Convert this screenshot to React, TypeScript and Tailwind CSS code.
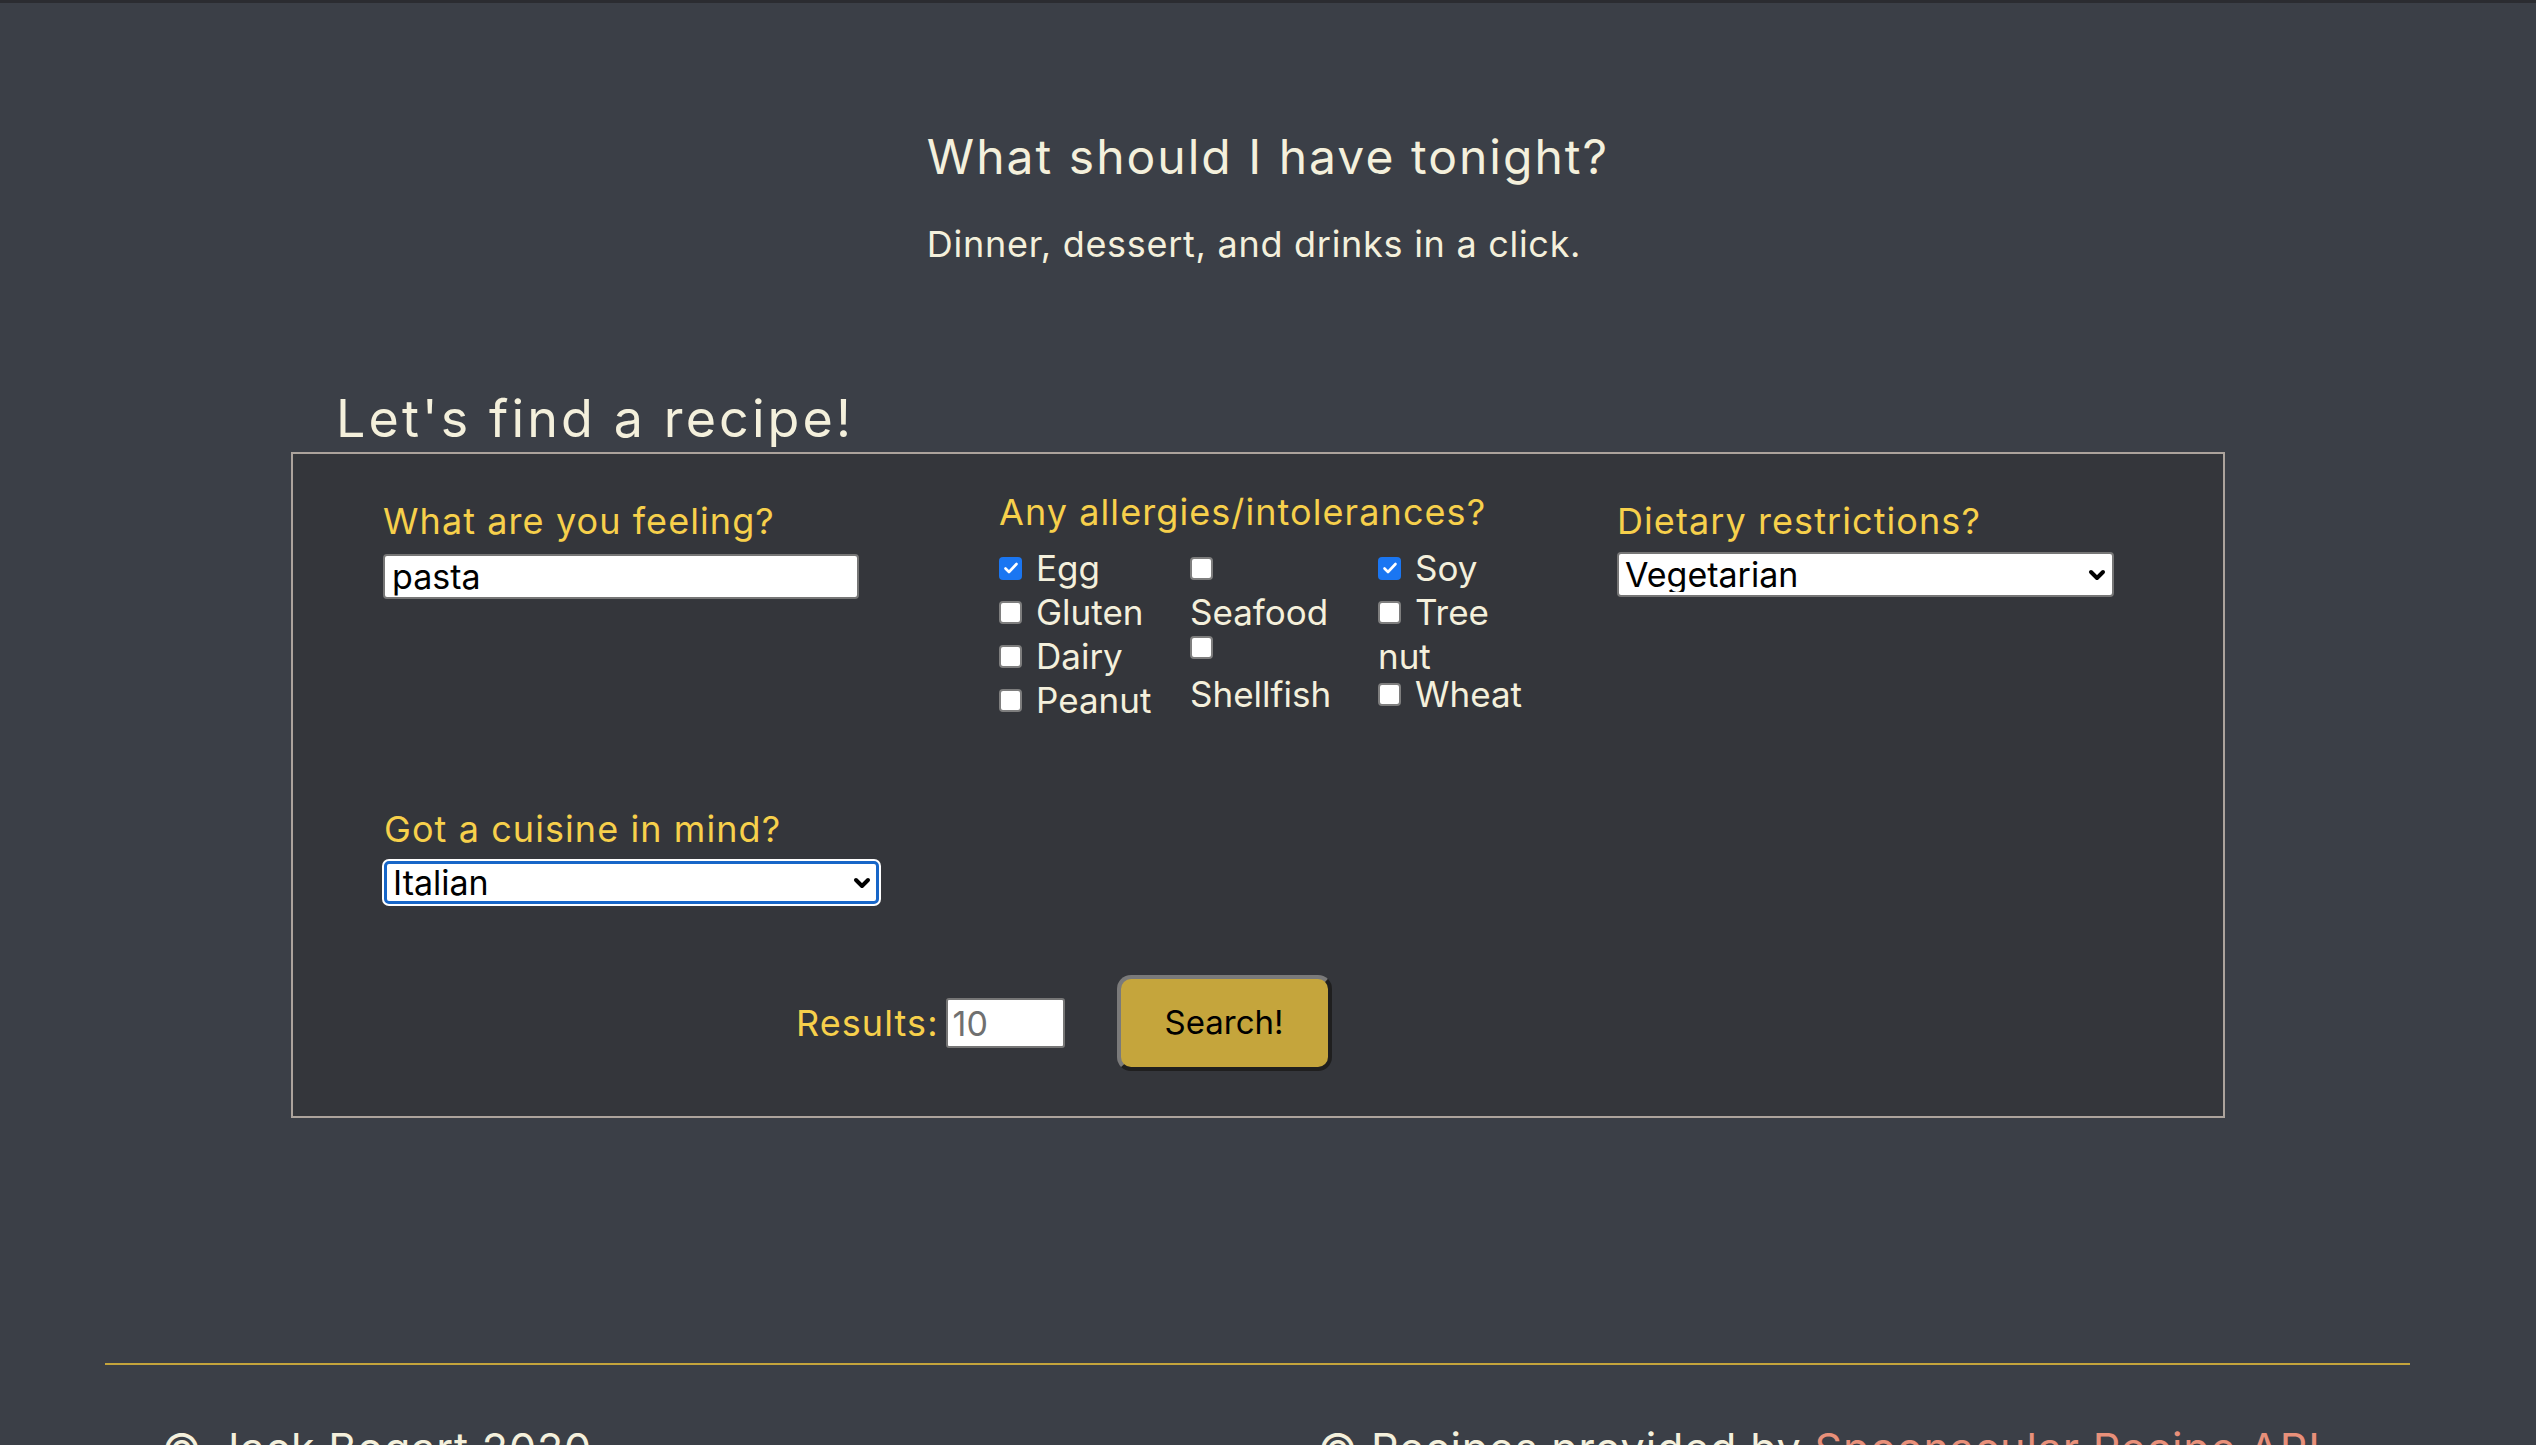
import React from "react";
import { ChevronDown } from "lucide-react";

// custom checkbox look (chrome default, scaled)
const Box = ({ checked }: { checked?: boolean }) =>
  checked ? (
    <div className="w-[23px] h-[23px] rounded-[4px] bg-[#1a76f2] flex items-center justify-center shrink-0">
      <svg width="16" height="16" viewBox="0 0 16 16" fill="none">
        <path d="M2.5 8.5l3.5 3.5 7.5-8" stroke="white" strokeWidth="2.6" strokeLinecap="round" strokeLinejoin="round" />
      </svg>
    </div>
  ) : (
    <div className="w-[23px] h-[23px] rounded-[4px] bg-white border-2 border-[#7e7e7e] shrink-0" />
  );

const Line = ({ children, cls = "" }: { children?: React.ReactNode; cls?: string }) => (
  <div className={"h-[44px] flex items-center " + cls}>{children}</div>
);

const Check = ({ label, checked, cls = "" }: { label?: string; checked?: boolean; cls?: string }) => (
  <Line cls={cls}>
    <Box checked={checked} />
    {label && <span className="ml-[14px]">{label}</span>}
  </Line>
);

const Select = ({ value, focused }: { value: string; focused?: boolean }) => (
  <div className="relative w-fit">
    <select
      defaultValue={value}
      className={
        focused
          ? "appearance-none block w-[495px] h-[43px] bg-white text-black pl-[6px] rounded-[5px] border-[3px] border-[#1766c8] shadow-[0_0_0_2px_#ffffff] text-[34px] leading-none outline-none"
          : "appearance-none block w-[497px] h-[45px] bg-white text-black pl-[6px] rounded-[4px] border-2 border-[#767676] text-[34px] leading-none"
      }
    >
      <option>{value}</option>
    </select>
    <ChevronDown
      className="absolute right-[5px] top-1/2 -translate-y-1/2 text-black pointer-events-none"
      size={24}
      strokeWidth={4}
    />
  </div>
);

const label = "text-[36px] leading-[40px] tracking-[0.03em] text-[#f7d04b]";

export default function App() {
  return (
    <div className="min-h-screen bg-[#3b3f47] border-t-[3px] border-[#2b2c31] font-['Inter',sans-serif] text-[#f4f0dc] overflow-hidden">
      {/* header */}
      <div className="flex justify-center pt-[126px]">
        <div className="text-left">
          <h1 className="text-[48px] leading-[56px] tracking-[0.042em]">What should I have tonight?</h1>
          <p className="text-[36px] leading-[42px] tracking-[0.02em] mt-[38px]">Dinner, dessert, and drinks in a click.</p>
        </div>
      </div>

      {/* search form */}
      <div className="ml-[291px] w-[1934px] mt-[125px]">
        <h2 className="text-[52px] leading-[58px] tracking-[0.06em] pl-[45px]">Let's find a recipe!</h2>
        <div className="mt-[4px] border-2 border-[#aca39c] bg-[#34363b] pt-[38px] pb-[45px]">
          <div className="flex items-start pl-[90px]">
            <div className="w-[616px] pt-[9px]">
              <div className={label}>What are you feeling?</div>
              <input
                defaultValue="pasta"
                className="mt-[13px] w-[476px] h-[45px] bg-white text-black text-[34px] pl-[7px] rounded-[4px] border-2 border-[#767676]"
              />
            </div>

            <div className="w-[618px]">
              <div className={label}>Any allergies/intolerances?</div>
              <div className="mt-[14px] flex text-[35px]">
                <div className="w-[191px]">
                  <Check label="Egg" checked />
                  <Check label="Gluten" />
                  <Check label="Dairy" />
                  <Check label="Peanut" />
                </div>
                <div className="w-[188px]">
                  <Check />
                  <Line>Seafood</Line>
                  <Check cls="-mt-[9px] mb-[3px]" />
                  <Line>Shellfish</Line>
                </div>
                <div>
                  <Check label="Soy" checked />
                  <Check label="Tree" />
                  <Line>nut</Line>
                  <Check label="Wheat" cls="-mt-[6px]" />
                </div>
              </div>
            </div>

            <div className="pt-[9px]">
              <div className={label}>Dietary restrictions?</div>
              <div className="mt-[11px]">
                <Select value="Vegetarian" />
              </div>
            </div>
          </div>

          <div className="pl-[91px] mt-[87px]">
            <div className={label}>Got a cuisine in mind?</div>
            <div className="mt-[12px]">
              <Select value="Italian" focused />
            </div>
          </div>

          <div className="mt-[71px] pl-[503px] flex items-center">
            <span className="text-[36px] tracking-[0.03em] text-[#f7d04b]">Results:</span>
            <input
              defaultValue="10"
              className="ml-[7px] w-[119px] h-[50px] bg-white text-[#707070] text-[34px] pl-[5px] rounded-[3px] border-2 border-[#767676]"
            />
            <button className="ml-[52px] w-[215px] h-[96px] bg-[#c5a53c] text-black text-[33px] rounded-[14px] border-[4px] border-t-[#7a7a7a] border-l-[#7a7a7a] border-b-[#1f1f1f] border-r-[#1f1f1f]">
              Search!
            </button>
          </div>
        </div>
      </div>

      {/* footer */}
      <div className="mt-[245px] mx-[105px] border-t-2 border-[#c4a43c] w-[2305px]" />
      <div className="flex mt-[58px] text-[43px] leading-[50px] tracking-[0.02em]">
        <div className="pl-[162px] w-[1318px]">© Jack Bogart 2020</div>
        <div>
          © Recipes provided by <span className="text-[#e8907a]">Spoonacular Recipe API</span>
        </div>
      </div>
    </div>
  );
}
